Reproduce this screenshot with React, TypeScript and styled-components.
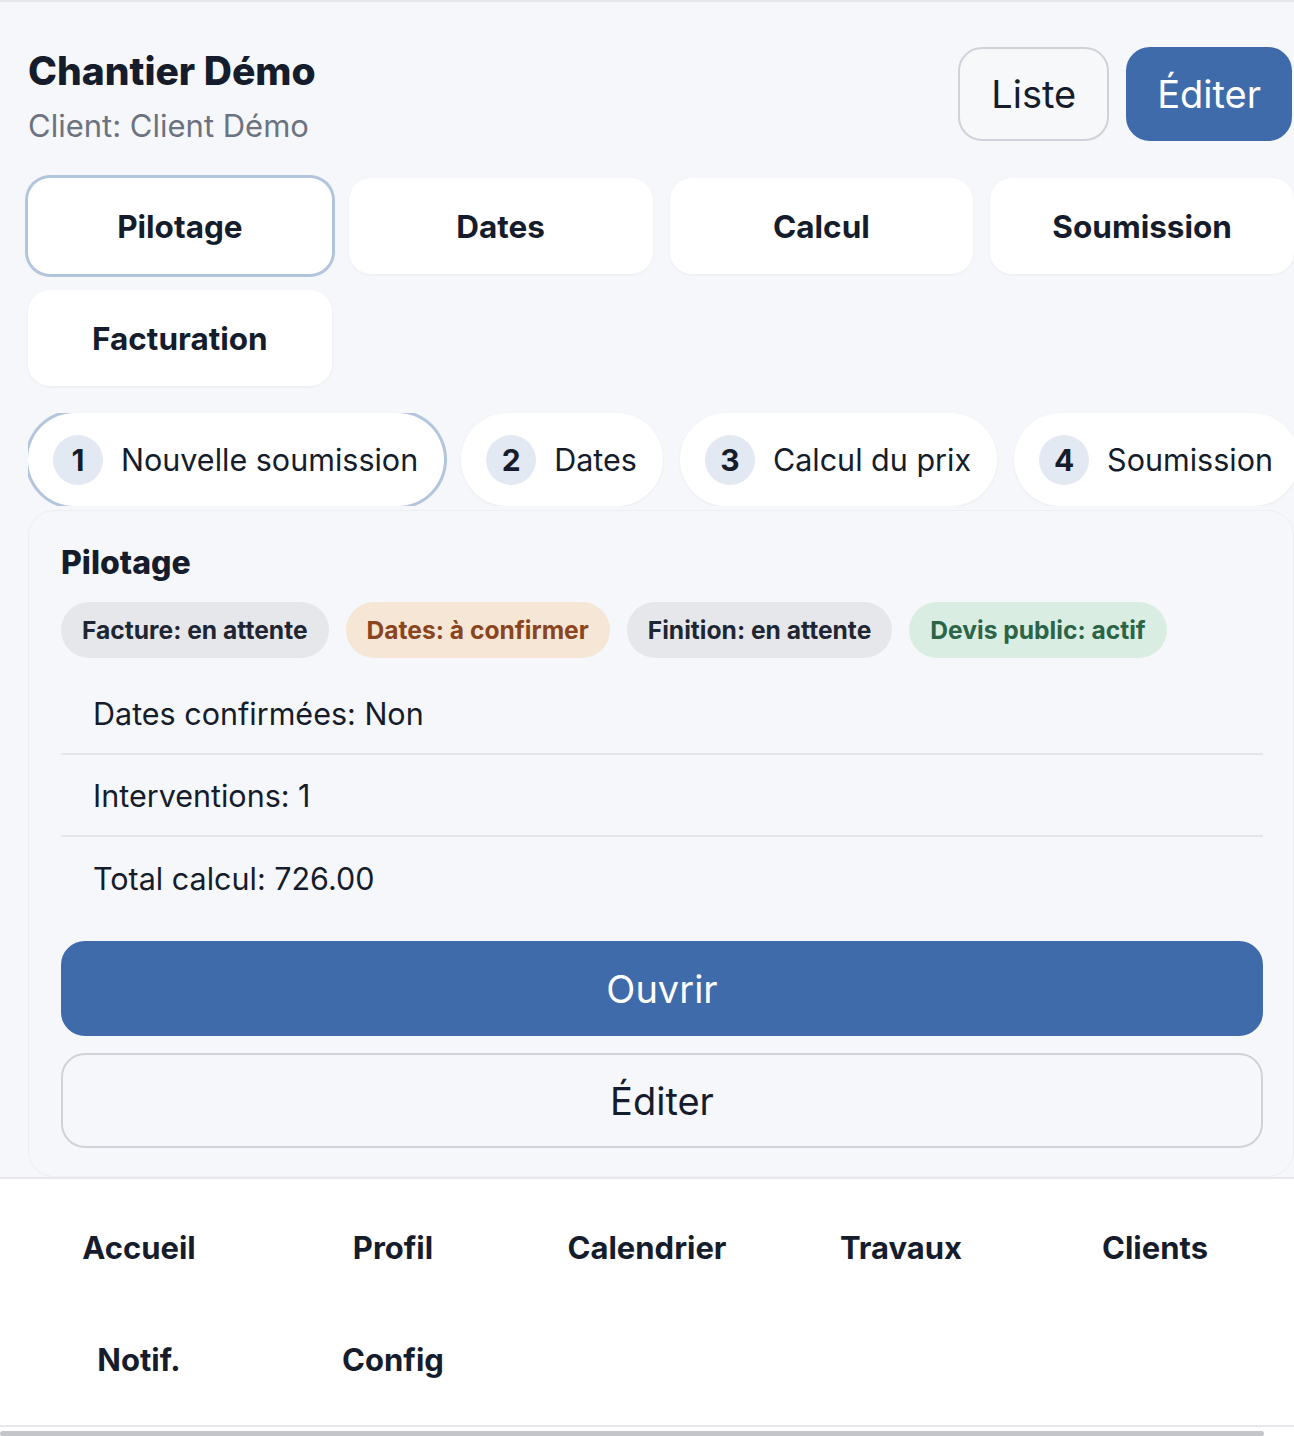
import styled, { createGlobalStyle } from 'styled-components';

// --- Global ---

const GlobalStyle = createGlobalStyle`
  html, body {
    margin: 0;
    padding: 0;
    background: #f6f7fa;
    overflow: hidden;
  }
  body {
    font-family: Inter, 'Noto Sans', 'Liberation Sans', sans-serif;
    color: #151c2b;
  }
  * {
    box-sizing: border-box;
  }
`;

const Screen = styled.div`
  display: flex;
  flex-direction: column;
  height: 100vh;
  width: 100vw;
  overflow: hidden;
`;

const Main = styled.main`
  flex: 1;
  min-height: 0;
  overflow: hidden;
  border-top: 2px solid #e6e8ec;
  padding: 45px 0 0 28px;
`;

const Content = styled.div`
  width: 1266px;
`;

// --- Header ---

const Header = styled.header`
  display: flex;
  justify-content: space-between;
  align-items: flex-start;
`;

const Title = styled.h1`
  margin: 0;
  font-size: 39px;
  line-height: 48px;
  font-weight: 800;
  color: #151c2b;
`;

const Subtitle = styled.p`
  margin: 13px 0 0;
  font-size: 31px;
  line-height: 36px;
  color: #6b7280;
`;

const HeaderActions = styled.div`
  display: flex;
  gap: 17px;
  padding-right: 2px;
`;

const HeaderButton = styled.button<{ $primary?: boolean }>`
  height: 94px;
  padding: 0 ${p => (p.$primary ? 29 : 31)}px;
  border-radius: 24px;
  font-family: inherit;
  font-size: 38px;
  cursor: pointer;
  border: 2px solid ${p => (p.$primary ? '#3f6bab' : '#cfd2d8')};
  background: ${p => (p.$primary ? '#3f6bab' : '#f7f8fa')};
  color: ${p => (p.$primary ? '#ffffff' : '#151c2b')};
`;

// --- Section tabs ---

const TabGrid = styled.div`
  display: grid;
  grid-template-columns: repeat(4, 1fr);
  gap: 16px 17px;
  margin-top: 34px;
`;

const Tab = styled.button<{ $active?: boolean }>`
  height: 96px;
  border: none;
  border-radius: 22px;
  background: #ffffff;
  font-family: inherit;
  font-size: 31.5px;
  font-weight: 700;
  color: #151c2b;
  cursor: pointer;
  box-shadow: ${p =>
    p.$active
      ? '0 0 0 3px #b3c4dd'
      : '0 1px 3px rgba(20, 30, 50, 0.05)'};
`;

// --- Stepper ---

const Stepper = styled.div`
  display: flex;
  gap: 17px;
  height: 93px;
  margin-top: 27px;
  overflow: hidden;
`;

const Step = styled.div<{ $active?: boolean }>`
  flex: none;
  display: flex;
  align-items: center;
  gap: 18px;
  height: 93px;
  padding: 0 26px 0 25px;
  border-radius: 999px;
  background: #ffffff;
  box-shadow: ${p =>
    p.$active
      ? '0 0 0 3px #b3c4dd'
      : '0 1px 3px rgba(20, 30, 50, 0.05)'};
`;

const StepNumber = styled.span`
  display: flex;
  align-items: center;
  justify-content: center;
  width: 50px;
  height: 50px;
  border-radius: 50%;
  background: #e3e9f2;
  font-size: 30px;
  font-weight: 700;
  color: #151c2b;
`;

const StepLabel = styled.span`
  font-size: 30.5px;
  color: #151c2b;
  white-space: nowrap;
`;

// --- Pilotage card ---

const Card = styled.section`
  margin-top: 4px;
  padding: 34px 30px 28px 32px;
  border: 1px solid #eceef2;
  border-radius: 26px;
  background: #f6f7fa;
`;

const CardTitle = styled.h2`
  margin: 0;
  font-size: 32px;
  line-height: 36px;
  font-weight: 800;
  color: #151c2b;
`;

const BadgeRow = styled.div`
  display: flex;
  gap: 17px;
  margin-top: 21px;
`;

const toneColors = {
  neutral: { bg: '#e5e7eb', fg: '#1f2633' },
  warning: { bg: '#f5e6d5', fg: '#8a4520' },
  success: { bg: '#d9ede3', fg: '#2b6446' },
};

type Tone = keyof typeof toneColors;

const Badge = styled.span<{ $tone: Tone }>`
  display: inline-flex;
  align-items: center;
  height: 56px;
  padding: 0 21px;
  border-radius: 999px;
  font-size: 24.6px;
  font-weight: 700;
  background: ${p => toneColors[p.$tone].bg};
  color: ${p => toneColors[p.$tone].fg};
`;

const InfoList = styled.ul`
  list-style: none;
  margin: 15px 0 0;
  padding: 0;
`;

const InfoRow = styled.li`
  display: flex;
  align-items: center;
  height: 82px;
  padding-left: 32px;
  font-size: 30.5px;
  color: #151c2b;
  border-bottom: 2px solid #e4e6ea;

  &:last-child {
    border-bottom: none;
  }
`;

const CardActions = styled.div`
  display: flex;
  flex-direction: column;
  gap: 17px;
  margin-top: 22px;
`;

const WideButton = styled.button<{ $primary?: boolean }>`
  height: 95px;
  border-radius: 24px;
  font-family: inherit;
  font-size: 38px;
  cursor: pointer;
  border: 2px solid ${p => (p.$primary ? '#3f6bab' : '#cfd2d8')};
  background: ${p => (p.$primary ? '#3f6bab' : 'transparent')};
  color: ${p => (p.$primary ? '#ffffff' : '#151c2b')};
`;

// --- Bottom navigation ---

const BottomNav = styled.nav`
  flex: none;
  display: grid;
  grid-template-columns: repeat(5, 1fr);
  grid-auto-rows: 112px;
  padding: 12px 12px 10px;
  background: #ffffff;
  border-top: 2px solid #e6e8ec;
  border-bottom: 2px solid #e6e8ec;
`;

const NavItem = styled.a`
  display: flex;
  align-items: center;
  justify-content: center;
  font-size: 31px;
  font-weight: 700;
  color: #151c2b;
  text-decoration: none;
`;

const ScrollTrack = styled.div`
  flex: none;
  height: 9px;
  padding: 4px 30px 0 0;
  background: #ffffff;
`;

const ScrollThumb = styled.div`
  height: 5px;
  border-radius: 3px;
  background: #c4c5c8;
`;

// --- Page ---

const tabs = ['Pilotage', 'Dates', 'Calcul', 'Soumission', 'Facturation'];
const steps = ['Nouvelle soumission', 'Dates', 'Calcul du prix', 'Soumission'];
const badges: { label: string; tone: Tone }[] = [
  { label: 'Facture: en attente', tone: 'neutral' },
  { label: 'Dates: à confirmer', tone: 'warning' },
  { label: 'Finition: en attente', tone: 'neutral' },
  { label: 'Devis public: actif', tone: 'success' },
];
const infos = ['Dates confirmées: Non', 'Interventions: 1', 'Total calcul: 726.00'];
const navLinks = ['Accueil', 'Profil', 'Calendrier', 'Travaux', 'Clients', 'Notif.', 'Config'];

export default function App() {
  return (
    <>
      <GlobalStyle />
      <Screen>
        <Main>
          <Content>
            <Header>
              <div>
                <Title>Chantier Démo</Title>
                <Subtitle>Client: Client Démo</Subtitle>
              </div>
              <HeaderActions>
                <HeaderButton>Liste</HeaderButton>
                <HeaderButton $primary>Éditer</HeaderButton>
              </HeaderActions>
            </Header>

            <TabGrid>
              {tabs.map((t, i) => (
                <Tab key={t} $active={i === 0}>
                  {t}
                </Tab>
              ))}
            </TabGrid>

            <Stepper>
              {steps.map((s, i) => (
                <Step key={s} $active={i === 0}>
                  <StepNumber>{i + 1}</StepNumber>
                  <StepLabel>{s}</StepLabel>
                </Step>
              ))}
            </Stepper>

            <Card>
              <CardTitle>Pilotage</CardTitle>
              <BadgeRow>
                {badges.map(b => (
                  <Badge key={b.label} $tone={b.tone}>
                    {b.label}
                  </Badge>
                ))}
              </BadgeRow>
              <InfoList>
                {infos.map(line => (
                  <InfoRow key={line}>{line}</InfoRow>
                ))}
              </InfoList>
              <CardActions>
                <WideButton $primary>Ouvrir</WideButton>
                <WideButton>Éditer</WideButton>
              </CardActions>
            </Card>
          </Content>
        </Main>

        <BottomNav>
          {navLinks.map(l => (
            <NavItem key={l} href="#">
              {l}
            </NavItem>
          ))}
        </BottomNav>
        <ScrollTrack>
          <ScrollThumb />
        </ScrollTrack>
      </Screen>
    </>
  );
}
